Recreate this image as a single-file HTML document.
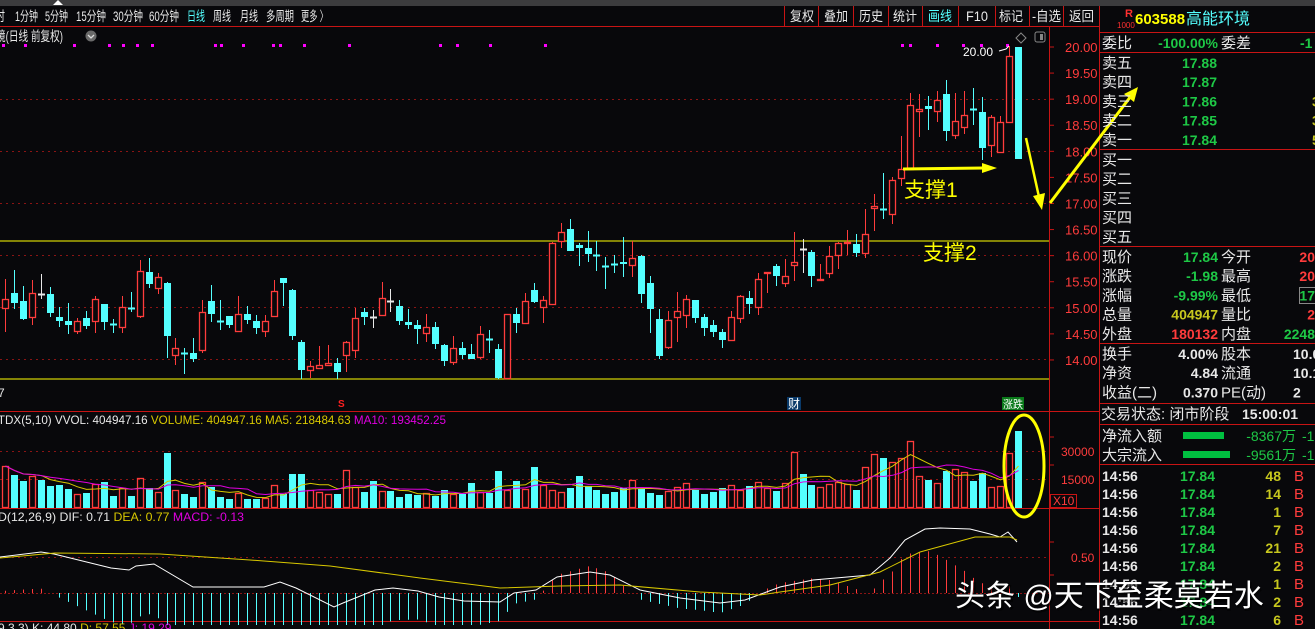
<!DOCTYPE html>
<html><head><meta charset="utf-8">
<style>
html,body{margin:0;padding:0;background:#08080b;}
body{width:1315px;height:629px;overflow:hidden;position:relative;font-family:"Liberation Sans","Noto Sans CJK SC",sans-serif;}
svg{position:absolute;left:0;top:0;}
text{font-family:"Liberation Sans","Noto Sans CJK SC",sans-serif;}
</style></head>
<body>
<svg id="s" width="1315" height="629" viewBox="0 0 1315 629" xmlns="http://www.w3.org/2000/svg">
<rect x="0" y="0" width="1315" height="629" fill="#08080b"/>
<rect x="0" y="0" width="1315" height="6" fill="#3c3c3e"/>
<polygon points="53,5 58,0 63,5" fill="#fff"/>
<g font-size="13.5" fill="#e8e8e8">
<text x="-5" y="21" textLength="10" lengthAdjust="spacingAndGlyphs">时</text>
<text x="15" y="21" textLength="23" lengthAdjust="spacingAndGlyphs">1分钟</text>
<text x="45" y="21" textLength="23" lengthAdjust="spacingAndGlyphs">5分钟</text>
<text x="76" y="21" textLength="30" lengthAdjust="spacingAndGlyphs">15分钟</text>
<text x="113" y="21" textLength="30" lengthAdjust="spacingAndGlyphs">30分钟</text>
<text x="149" y="21" textLength="30" lengthAdjust="spacingAndGlyphs">60分钟</text>
<text x="187" y="21" textLength="18" lengthAdjust="spacingAndGlyphs" fill="#55ffff">日线</text>
<text x="213" y="21" textLength="18" lengthAdjust="spacingAndGlyphs">周线</text>
<text x="240" y="21" textLength="18" lengthAdjust="spacingAndGlyphs">月线</text>
<text x="266" y="21" textLength="28" lengthAdjust="spacingAndGlyphs">多周期</text>
<text x="301" y="21" textLength="27" lengthAdjust="spacingAndGlyphs">更多 〉</text>
</g>
<g stroke="#c81414" stroke-width="1">
<line x1="784.5" y1="6" x2="784.5" y2="26"/><line x1="818.5" y1="6" x2="818.5" y2="26"/>
<line x1="853.5" y1="6" x2="853.5" y2="26"/><line x1="888.5" y1="6" x2="888.5" y2="26"/>
<line x1="922.5" y1="6" x2="922.5" y2="26"/><line x1="958.5" y1="6" x2="958.5" y2="26"/>
<line x1="995.5" y1="6" x2="995.5" y2="26"/><line x1="1029.5" y1="6" x2="1029.5" y2="26"/>
<line x1="1063.5" y1="6" x2="1063.5" y2="26"/><line x1="1099.5" y1="6" x2="1099.5" y2="629"/>
</g>
<g font-size="13.5" fill="#e8e8e8">
<text x="790" y="21" textLength="24" lengthAdjust="spacingAndGlyphs">复权</text>
<text x="824" y="21" textLength="24" lengthAdjust="spacingAndGlyphs">叠加</text>
<text x="859" y="21" textLength="24" lengthAdjust="spacingAndGlyphs">历史</text>
<text x="893" y="21" textLength="24" lengthAdjust="spacingAndGlyphs">统计</text>
<text x="928" y="21" textLength="24" lengthAdjust="spacingAndGlyphs" fill="#55ffff">画线</text>
<text x="966" y="21" textLength="22" lengthAdjust="spacingAndGlyphs">F10</text>
<text x="999" y="21" textLength="24" lengthAdjust="spacingAndGlyphs">标记</text>
<text x="1032" y="21" textLength="29" lengthAdjust="spacingAndGlyphs">-自选</text>
<text x="1069" y="21" textLength="25" lengthAdjust="spacingAndGlyphs">返回</text>
</g>
<line x1="0" y1="26.5" x2="1099" y2="26.5" stroke="#c81414"/>
<text x="-4" y="41" font-size="13.5" fill="#e8e8e8" textLength="67" lengthAdjust="spacingAndGlyphs">境(日线 前复权)</text>
<circle cx="91" cy="36" r="5.5" fill="#6a6a6a"/>
<path d="M88 35 L91 38 L94 35" stroke="#ddd" stroke-width="1.3" fill="none"/>
<path d="M1021 33 L1026 38 L1021 43 L1016 38 Z" stroke="#888" fill="none"/>
<rect x="1035" y="32" width="10" height="10" rx="2" stroke="#888" fill="none"/>
<rect x="1040" y="34" width="3" height="6" fill="#888"/>
<g id="dots" fill="#ff00ff"></g>
<line x1="1049.5" y1="27" x2="1049.5" y2="629" stroke="#c81414"/>
<g id="grid"></g>
<g id="axis" font-size="13" fill="#ff3c3c"></g>
<line x1="0" y1="241" x2="1049" y2="241" stroke="#ffff00"/>
<line x1="0" y1="379" x2="1049" y2="379" stroke="#ffff00"/>
<line x1="0" y1="411.5" x2="1099" y2="411.5" stroke="#c81414"/>
<line x1="0" y1="508.5" x2="1099" y2="508.5" stroke="#c81414"/>
<line x1="0" y1="621.5" x2="1099" y2="621.5" stroke="#c81414"/>
<text x="-2" y="397" font-size="12" fill="#e8e8e8">7</text>
<text x="338" y="407" font-size="10" fill="#ff2020" font-weight="bold">S</text>
<rect x="787" y="397" width="14" height="13" fill="#0a3a6a"/>
<text x="788" y="408" font-size="12" fill="#fff">财</text>
<rect x="1002" y="397" width="22" height="13" fill="#0a7a1a"/>
<text x="1003" y="408" font-size="11" fill="#fff" textLength="20" lengthAdjust="spacingAndGlyphs">涨跌</text>
<text x="963" y="56" font-size="12" fill="#fff">20.00</text>
<path d="M999 51 L1006 49 L1009 46" stroke="#fff" fill="none"/>
<g id="candles"></g>
<g id="vol"></g>
<g id="macd"></g>
<text x="-6" y="424" font-size="12" textLength="452" lengthAdjust="spacingAndGlyphs"><tspan fill="#e8e8e8">-TDX(5,10) VVOL: 404947.16 </tspan><tspan fill="#d8c800">VOLUME: 404947.16 MA5: 218484.63 </tspan><tspan fill="#e000e0">MA10: 193452.25</tspan></text>
<text x="-2" y="521" font-size="12" textLength="246" lengthAdjust="spacingAndGlyphs"><tspan fill="#e8e8e8">D(12,26,9) DIF: 0.71 </tspan><tspan fill="#d8c800">DEA: 0.77 </tspan><tspan fill="#e000e0">MACD: -0.13</tspan></text>
<text x="-6" y="632" font-size="12" fill="#e8e8e8">(9,3,3) K: 44.80 <tspan fill="#d8c800">D: 57.55</tspan> <tspan fill="#e000e0">J: 19.29</tspan></text>
<rect x="1050.5" y="494.5" width="26" height="13" fill="none" stroke="#c81414"/>
<text x="1053" y="505" font-size="12" fill="#ff3c3c">X10</text>
<text x="1061" y="484" font-size="12" fill="#ff3c3c">15000</text>
<text x="1061" y="456" font-size="12" fill="#ff3c3c">30000</text>
<text x="1071" y="562" font-size="12" fill="#ff3c3c">0.50</text>
<ellipse cx="1024" cy="466" rx="20" ry="51" fill="none" stroke="#ffff00" stroke-width="3"/>
<g fill="#ffff00" stroke="#ffff00">
<path d="M903 169 L984 168" stroke-width="3"/>
<polygon points="982,163 997,168 982,173" stroke="none"/>
<path d="M1026 138 L1039 197" stroke-width="2.5"/>
<polygon points="1033,196 1042,210 1045,193" stroke="none"/>
<path d="M1050 203 L1131 96" stroke-width="3"/>
<polygon points="1124,94 1138,87 1134,102" stroke="none"/>
</g>
<text x="904" y="197" font-size="21" fill="#ffff00">支撑1</text>
<text x="923" y="260" font-size="21" fill="#ffff00">支撑2</text>
<g id="rp" font-size="15" fill="#e8e8e8">
<text x="1125" y="17" font-size="11" font-weight="bold" fill="#ff3030">R</text>
<text x="1117" y="28" font-size="8" fill="#ff3030">1000</text>
<text x="1135" y="24" font-size="15" font-weight="bold" fill="#ffff00">603588</text>
<text x="1186" y="24" font-size="16" fill="#55ffff">高能环境</text>
</g>
<g stroke="#c81414">
<line x1="1100" y1="32.5" x2="1315" y2="32.5"/><line x1="1100" y1="52.5" x2="1315" y2="52.5"/>
<line x1="1100" y1="149.5" x2="1315" y2="149.5"/><line x1="1100" y1="246.5" x2="1315" y2="246.5"/>
<line x1="1100" y1="343.5" x2="1315" y2="343.5"/><line x1="1100" y1="403.5" x2="1315" y2="403.5"/>
<line x1="1100" y1="424.5" x2="1315" y2="424.5"/><line x1="1100" y1="464.5" x2="1315" y2="464.5"/>
</g>
<rect x="1299.5" y="287.5" width="17" height="16" fill="none" stroke="#888"/>
<rect x="1183" y="432" width="41" height="7" fill="#00c040"/>
<rect x="1183" y="451" width="47" height="7" fill="#00c040"/>
<g id="wm">
<g font-size="30" font-weight="bold" fill="#000" opacity="0.6">
<text x="957" y="608">头条 @天下至柔莫若水</text></g>
<g font-size="30" fill="#ffffff">
<text x="955" y="606">头条 @天下至柔莫若水</text></g>
</g>
</svg>
<script>
(function(){
var NS="http://www.w3.org/2000/svg";
function el(p,t,a,txt){var e=document.createElementNS(NS,t);for(var k in a)e.setAttribute(k,a[k]);if(txt!==undefined)e.textContent=txt;document.getElementById(p).appendChild(e);return e;}
var dx=[3,25,74,109,123,137,152,215,221,243,273,280,304,349,440,457,490,545,902,910,937,963,981,1007];
dx.forEach(function(x){el('dots','rect',{x:x-1,y:44,width:3,height:3});});
[99,151,203,255,307,359,451,479,557].forEach(function(y){el('grid','line',{x1:0,y1:y+.5,x2:1049,y2:y+.5,stroke:'#8a1414','stroke-dasharray':'2,4'});});
el('grid','line',{x1:0,y1:593.5,x2:1049,y2:593.5,stroke:'#8a1414','stroke-dasharray':'2,2'});
var labs=["20.00","19.50","19.00","18.50","18.00","17.50","17.00","16.50","16.00","15.50","15.00","14.50","14.00"];
for(var q=0;q<13;q++){var yy=47+q*26.08;el('axis','text',{x:1065,y:yy+5},labs[q]);el('grid','line',{x1:1049,y1:yy,x2:1054,y2:yy,stroke:'#c81414'});}
[465,437,542,575].forEach(function(y){el('grid','line',{x1:1049,y1:y,x2:1054,y2:y,stroke:'#c81414'});});
var C=[
['r',299,308,279,332],['c',293,303,270,309],['c',301,319,286,320],['r',293,317,280,325],['w',294,294,274,299],['c',294,313,287,317],['c',317,321,307,327],['c',321,325,303,334],['r',321,331,318,334],['c',318,326,311,329],
['r',299,321,296,333],['c',304,322,304,330],['c',324,324,319,333],['r',307,327,296,333],['c',308,308,292,312],['r',271,316,260,318],['c',272,284,258,288],['r',277,288,273,294],['c',283,336,282,358],['r',348,355,338,365],
['c',353,353,348,374],['c',353,359,338,362],['r',312,350,300,353],['c',301,314,285,322],['c',321,321,300,330],['c',316,325,316,328],['r',314,331,296,331],['c',314,320,306,324],['c',321,328,315,334],['r',321,331,315,337],
['r',291,316,280,316],['c',278,283,278,306],['c',290,336,289,340],['c',342,370,340,379],['r',366,370,361,378],['r',365,368,346,369],['r',363,365,345,365],['c',363,372,358,379],['r',342,355,341,372],['r',318,350,308,358],
['c',312,317,308,325],['w',317,317,310,328],['r',298,315,282,316],['w',301,301,289,312],['c',306,321,300,325],['c',322,325,309,329],['c',325,329,320,344],['r',327,333,314,342],['c',327,344,322,349],['c',345,361,344,366],
['r',348,362,336,365],['c',348,355,342,359],['c',354,359,344,359],['r',334,357,326,359],['c',339,339,330,353],
['c',349,378,344,379],['r',314,378,314,378],['c',314,323,308,333],['r',301,323,293,323],['c',290,302,283,303],['r',300,307,296,323],['r',243,304,242,304],['r',232,241,223,248],['c',229,251,219,251],['c',245,248,243,266],
['c',248,254,231,262],['c',255,255,241,271],['c',266,266,257,289],['c',264,264,255,273],['c',262,264,237,277],['r',258,265,241,277],['c',256,294,255,303],['c',283,309,276,333],['c',319,356,309,359],['r',320,347,311,349],
['r',311,317,292,342],['r',299,315,295,328],['c',300,318,300,323],['c',317,328,314,336],['c',325,332,320,337],['c',332,340,329,348],['r',317,340,311,340],['r',296,318,295,323],['c',298,304,291,314],['r',279,307,273,315],
['r',272,273,272,293],['c',266,276,264,286],['r',276,283,259,287],['r',262,265,232,281],['w',249,249,239,273],['c',252,276,250,287],['r',279,280,264,280],['r',256,273,246,278],['r',243,255,242,269],['r',242,243,230,255],
['c',244,253,234,257],['r',234,253,209,258],['r',206,208,194,231],['c',209,209,173,219],['r',180,214,177,224],['r',169,178,136,186],['r',105,169,93,169],['r',109,111,94,137],['c',106,109,96,130],['r',100,111,91,122],
['c',94,131,80,141],['r',121,135,93,139],['r',115,127,91,134],['c',109,109,88,125],['c',112,148,97,160],['r',117,145,115,157],['r',122,152,116,153],['r',56,122,46,122],['c',47,159,47,159]];
var N=C.length, x0=5.3, spc=(1017.5-5.3)/(N-1);
var col={r:'#ff3c3c',c:'#54ffff',w:'#e8e8e8'};
var X=[];
for(var i=0;i<N;i++){var d=C[i],x=Math.round(x0+spc*i)+.5;X.push(x);var c=col[d[0]];
el('candles','line',{x1:x,y1:d[3],x2:x,y2:d[4],stroke:c});
var h=d[2]-d[1];
if(h<1){el('candles','line',{x1:x-3.5,y1:d[1]+.5,x2:x+3.5,y2:d[1]+.5,stroke:c,'stroke-width':2});}
else if(d[0]=='r'){el('candles','rect',{x:x-3,y:d[1]+.5,width:6,height:h,fill:'#08080b',stroke:c,'stroke-width':1.3});}
else{el('candles','rect',{x:x-3.5,y:d[1],width:7,height:h,fill:c});}}
var V=[466,475,481,476,480,486,485,489,494,493,484,482,496,488,496,478,488,492,453,490,494,497,482,487,497,499,493,499,499,498,485,494,474,474,490,492,494,494,470,487,492,481,491,491,497,494,495,493,496,490,494,494,483,492,493,471,490,481,489,467,
485,490,492,488,476,486,490,494,492,488,480,489,493,495,491,487,483,490,494,492,488,485,490,486,482,488,
491,483,452,474,485,487,484,482,484,490,467,454,458,462,458,441,476,480,483,471,469,472,481,473,487,486,453,431];
var base=508;
for(var i=0;i<N;i++){var tv0=V[i]||490,x=X[i];var r=C[i][0]=='r';
if(r)el('vol','rect',{x:x-3,y:tv0+.5,width:6,height:base-tv0-1,fill:'none',stroke:'#ff3c3c','stroke-width':1.3});
else el('vol','rect',{x:x-3.5,y:tv0,width:7,height:base-tv0,fill:'#54ffff'});}
function ma(n){var p=[];for(var i=0;i<N;i++){var s=0,k=0;for(var j=Math.max(0,i-n+1);j<=i;j++){s+=base-(V[j]||490);k++;}p.push(X[i]+','+(base-s/k).toFixed(1));}return p.join(' ');}
el('vol','polyline',{points:ma(5),fill:'none',stroke:'#d8c800'});
el('vol','polyline',{points:ma(10),fill:'none',stroke:'#e000e0'});
var DIF=[[0,557],[41,552],[54,554],[111,568],[129,570],[136,566],[154,564],[193,587],[264,587],[280,582],[296,588],[334,607],[343,603],[375,590],[393,588],[418,591],[439,597],[464,601],[500,602],[514,593],[536,590],[557,577],[590,572],[610,575],[640,590],[680,598],[720,603],[745,600],[780,587],[813,580],[870,575],[890,558],[905,540],[925,529],[940,528],[970,529],[990,534],[1000,537],[1008,532],[1017,542]];
var DEA=[[0,558],[55,553],[160,554],[250,560],[330,566],[420,578],[500,588],[560,586],[620,585],[700,592],[760,595],[780,592],[830,585],[880,572],[920,552],[975,537],[1010,537],[1017,540]];
function interp(a,xv){for(var k=1;k<a.length;k++){if(xv<=a[k][0]){var f=(xv-a[k-1][0])/(a[k][0]-a[k-1][0]);return a[k-1][1]+f*(a[k][1]-a[k-1][1]);}}return a[a.length-1][1];}
for(var i=0;i<N;i++){var xm=X[i];var m=2*(interp(DEA,xm)-interp(DIF,xm));
if(!isFinite(m))continue;var bt=Math.max(540,Math.min(625,593-m));
if(Math.abs(bt-593)<1)continue;
el('macd','line',{x1:xm,y1:593,x2:xm,y2:bt.toFixed(1),stroke:m>0?'#ff3c3c':'#54ffff'});}
el('macd','polyline',{points:DIF.map(function(p){return p.join(',')}).join(' '),fill:'none',stroke:'#ffffff'});
el('macd','polyline',{points:DEA.map(function(p){return p.join(',')}).join(' '),fill:'none',stroke:'#d8c800'});
function T(x,y,s,c,o){var a={x:x,y:y,fill:c||'#e8e8e8'};if(o)for(var k in o)a[k]=o[k];return el('rp','text',a,s);}
var G='#1ec846',R='#ff3c3c',Y='#c8c81e';
T(1102,48,'委比');T(1218,48,'-100.00%',G,{'text-anchor':'end','font-weight':'bold','font-size':14});T(1221,48,'委差');T(1300,48,'-1',G,{'font-weight':'bold','font-size':14});
var sn=['卖五','卖四','卖三','卖二','卖一'],spx=['17.88','17.87','17.86','17.85','17.84'];
for(var i=0;i<5;i++){var y=68+i*19.2;T(1102,y,sn[i]);T(1217,y,spx[i],G,{'text-anchor':'end','font-weight':'bold','font-size':14});if(i>=2)T(1312,y,['','','3','3','5'][i],Y,{'font-weight':'bold','font-size':14});}
var bn=['买一','买二','买三','买四','买五'];
for(var i=0;i<5;i++){T(1102,165+i*19.2,bn[i]);}
var r1=[['现价','17.84',G,'今开','20',R],['涨跌','-1.98',G,'最高','20',R],['涨幅','-9.99%',G,'最低','17',G],['总量','404947',Y,'量比','2',R],['外盘','180132',R,'内盘','2248',G]];
for(var i=0;i<5;i++){var y=262+i*19.2,d=r1[i];T(1102,y,d[0]);T(1218,y,d[1],d[2],{'text-anchor':'end','font-weight':'bold','font-size':14});T(1221,y,d[3]);T(1315,y,d[4],d[5],{'text-anchor':'end','font-weight':'bold','font-size':14});}
var r2=[['换手','4.00%','股本','10.0'],['净资','4.84','流通','10.1'],['收益(二)','0.370','PE(动)','2']];
for(var i=0;i<3;i++){var y=359+i*19.2,d=r2[i];T(1102,y,d[0]);T(1218,y,d[1],'#e8e8e8',{'text-anchor':'end','font-weight':'bold','font-size':14});T(1221,y,d[2]);T(1293,y,d[3],'#e8e8e8',{'font-weight':'bold','font-size':14});}
T(1101,419,'交易状态: 闭市阶段',null,{'font-size':15});T(1242,419,'15:00:01','#e8e8e8',{'font-weight':'bold','font-size':14});
T(1102,441,'净流入额');T(1296,441,'-8367万',G,{'text-anchor':'end','font-size':14});T(1302,441,'-1',G,{'font-size':14});
T(1102,460,'大宗流入');T(1296,460,'-9561万',G,{'text-anchor':'end','font-size':14});T(1302,460,'-1',G,{'font-size':14});
var tvs=['48','14','1','7','21','2','1','2','6'];
for(var i=0;i<9;i++){var y=481+i*18;T(1102,y,'14:56','#e8e8e8',{'font-weight':'bold','font-size':14});T(1215,y,'17.84',G,{'text-anchor':'end','font-weight':'bold','font-size':14});T(1281,y,tvs[i],Y,{'text-anchor':'end','font-weight':'bold','font-size':14});T(1294,y,'B',R,{'font-size':15});}
var svg=document.getElementById('s');svg.appendChild(document.getElementById('wm'));
})();
</script>
</body></html>
